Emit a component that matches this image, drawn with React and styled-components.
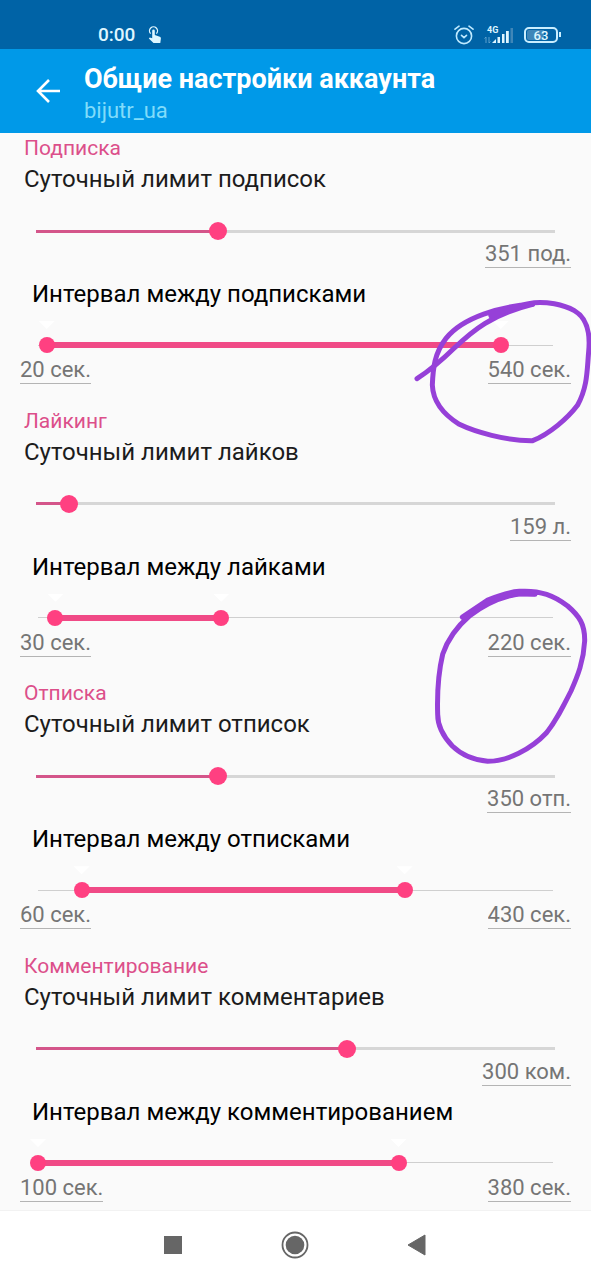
import React, {useState} from 'react';
import styled, {createGlobalStyle} from 'styled-components';

const GlobalStyle = createGlobalStyle`
    * {
        box-sizing: border-box;
    }

    body {
        margin: 0;
        background: #fafafa;
        font-family: Roboto, "Noto Sans", sans-serif;
    }
`

const Page = styled.div`
    display: flex;
    flex-direction: column;
    min-height: 100vh;
    overflow: hidden;
`

const StatusBar = styled.div`
    display: flex;
    justify-content: space-between;
    align-items: center;
    height: 49px;
    padding: 20px 30px 0 98px;
    background: #0063a6;
    color: #dff6ff;
`

const StatusGroup = styled.div`
    display: flex;
    align-items: center;
    gap: ${props => props.$tight ? '10px' : '13px'};
`

const Clock = styled.span`
    font-size: 19px;
    line-height: 24px;
    font-weight: 500;
`

const Network = styled.div`
    display: grid;
    font-size: 9px;
    line-height: 9px;
    font-weight: 700;
`

const NetworkType = styled.span`
    grid-area: 1 / 1;
    padding-left: 3px;
`

const NetworkBars = styled.svg`
    grid-area: 1 / 1;
`

const Battery = styled.div`
    display: flex;
    align-items: center;

    &::after {
        content: '';
        width: 2px;
        height: 5px;
        margin-left: 1px;
        background: #c9eeff;
    }
`

const BatteryLevel = styled.span`
    width: 34px;
    height: 16px;
    border: 2px solid #c9eeff;
    border-radius: 5px;
    background: linear-gradient(90deg, #3f86b8 60%, transparent 60%) content-box;
    padding: 1px;
    font-size: 13px;
    line-height: 11px;
    font-weight: 500;
    text-align: center;
`

const AppBar = styled.header`
    display: flex;
    align-items: center;
    gap: 24px;
    height: 84px;
    padding: 0 36px;
    background: #0099e8;
    color: #fff;
`

const BackButton = styled.button`
    display: flex;
    padding: 0;
    border: 0;
    background: none;
    color: inherit;
    cursor: pointer;
`

const Heading = styled.div`
    padding-top: 8px;
`

const Title = styled.h1`
    margin: 0;
    font-size: 27px;
    line-height: 32px;
    font-weight: 700;
`

const Account = styled.p`
    margin: 0;
    font-size: 22px;
    line-height: 32px;
    color: #80dcfa;
`

const Settings = styled.main`
    display: flex;
    flex: 1;
    flex-direction: column;
    justify-content: space-between;
    padding-bottom: 8px;
`

const Section = styled.section`
    display: flex;
    flex-direction: column;
    padding: 0 20px;
`

const SectionTitle = styled.h2`
    margin: 0;
    padding: 0 4px;
    font-size: 21px;
    line-height: 30px;
    font-weight: 400;
    color: #dc4f8a;
`

const Label = styled.label`
    padding: 0 4px;
    font-size: 24px;
    line-height: 32px;
    color: #1c1c1c;
`

const IntervalLabel = styled.div`
    padding: 8px 12px 0;
    font-size: 24px;
    line-height: 36px;
    color: #000;
`

const Slider = styled.div`
    display: grid;
    align-items: center;
    height: 18px;
    padding: 0 7px;
    margin-top: 27px;

    > * {
        grid-area: 1 / 1 / 2 / 2;
    }
`

const RangeSlider = styled(Slider)`
    position: relative;
    height: 22px;
    padding: 0 10px;
    margin-top: 22px;
`

const Track = styled.div`
    height: ${props => props.$thin ? '1px' : '3px'};
    margin: 0 ${props => props.$thin ? '8px' : '9px'};
    background: ${props => props.$thin ? '#cfcfcf' : '#d6d6d6'};
`

const Fill = styled.div`
    height: 3px;
    background: #d4558a;
`

const RangeFillArea = styled.div`
    margin: 0 8px;
`

const RangeFill = styled.div`
    height: 6px;
    background: #f04a86;
`

const Range = styled.input`
    appearance: none;
    width: 100%;
    height: 18px;
    margin: 0;
    background: transparent;
    pointer-events: none;

    &::-webkit-slider-thumb {
        appearance: none;
        width: ${props => props.$size};
        height: ${props => props.$size};
        border: 0;
        border-radius: 50%;
        background: #ff4081;
        pointer-events: auto;
        cursor: pointer;
    }
`

// white arrows hanging over the thumbs
const Pointers = styled.div`
    position: absolute;
    top: -13px;
    left: 8px;
    right: 8px;
    height: 8px;
`

const Pointer = styled.span`
    position: absolute;
    top: 0;
    width: 16px;
    height: 8px;
    background: #fff;
    clip-path: polygon(0 0, 100% 0, 50% 100%);
    transform: translateX(-50%);
`

const Values = styled.div`
    display: flex;
    justify-content: ${props => props.$end ? 'flex-end' : 'space-between'};
`

const Value = styled.input`
    field-sizing: content;
    height: 28px;
    padding: 0;
    border: 0;
    border-bottom: 1px solid #b4b4b4;
    background: none;
    font-family: inherit;
    font-size: 22px;
    line-height: 26px;
    color: #757575;
    outline: none;
`

const Interval = styled.div`
    position: relative;
`

const Scribble = styled.svg`
    position: absolute;
    top: ${props => props.$top};
    right: -20px;
    z-index: 1;
    overflow: visible;
    pointer-events: none;
    fill: none;
    stroke: #9640d8;
    stroke-width: 15;
    stroke-linecap: round;
    stroke-linejoin: round;
`

const NavBar = styled.nav`
    display: flex;
    justify-content: center;
    align-items: center;
    gap: 92px;
    height: 70px;
    padding: 0 2px 2px 0;
    border-top: 1px solid #f2f2f2;
    background: #fff;
`

const NavButton = styled.button`
    display: flex;
    padding: 0;
    border: 0;
    background: none;
    color: #666;
    cursor: pointer;
`

const sections = [
    {
        id: 'follow',
        title: 'Подписка',
        limit: {label: 'Суточный лимит подписок', value: 351, max: 1000, unit: 'под.'},
        interval: {label: 'Интервал между подписками', from: 20, to: 540, min: 10, max: 600},
        mark: 'wide',
    },
    {
        id: 'like',
        title: 'Лайкинг',
        limit: {label: 'Суточный лимит лайков', value: 159, max: 2500, unit: 'л.'},
        interval: {label: 'Интервал между лайками', from: 30, to: 220, min: 10, max: 600},
        mark: 'tall',
    },
    {
        id: 'unfollow',
        title: 'Отписка',
        limit: {label: 'Суточный лимит отписок', value: 350, max: 1000, unit: 'отп.'},
        interval: {label: 'Интервал между отписками', from: 60, to: 430, min: 10, max: 600},
    },
    {
        id: 'comment',
        title: 'Комментирование',
        limit: {label: 'Суточный лимит комментариев', value: 300, max: 500, unit: 'ком.'},
        interval: {label: 'Интервал между комментированием', from: 100, to: 380, min: 100, max: 500},
    },
];

function Limit({id, label, value, max, unit}) {
    const [current, setCurrent] = useState(value);

    return (
        <>
            <Label htmlFor={`${id}-limit`}>{label}</Label>
            <Slider>
                <Track><Fill style={{width: `${current / max * 100}%`}} /></Track>
                <Range
                    id={`${id}-limit`}
                    type="range"
                    $size="18px"
                    min={0}
                    max={max}
                    value={current}
                    onChange={e => setCurrent(Number(e.target.value))}
                />
            </Slider>
            <Values $end>
                <Value type="text" readOnly aria-label={label} value={`${current} ${unit}`} />
            </Values>
        </>
    );
}

function IntervalSetting({id, label, from, to, min, max, mark}) {
    const [low, setLow] = useState(from);
    const [high, setHigh] = useState(to);
    const percent = (value) => (value - min) / (max - min) * 100;

    return (
        <Interval role="group" aria-labelledby={`${id}-interval`}>
            <IntervalLabel id={`${id}-interval`}>{label}</IntervalLabel>
            <RangeSlider>
                <Track $thin />
                <RangeFillArea>
                    <RangeFill style={{marginLeft: `${percent(low)}%`, width: `${percent(high) - percent(low)}%`}} />
                </RangeFillArea>
                <Pointers>
                    <Pointer style={{left: `${percent(low)}%`}} />
                    <Pointer style={{left: `${percent(high)}%`}} />
                </Pointers>
                <Range
                    type="range"
                    $size="16px"
                    aria-label={`${label}: от`}
                    min={min}
                    max={max}
                    value={low}
                    onChange={e => setLow(Math.min(Number(e.target.value), high))}
                />
                <Range
                    type="range"
                    $size="16px"
                    aria-label={`${label}: до`}
                    min={min}
                    max={max}
                    value={high}
                    onChange={e => setHigh(Math.max(Number(e.target.value), low))}
                />
            </RangeSlider>
            <Values>
                <Value type="text" readOnly aria-label={`${label}: от`} value={`${low} сек.`} />
                <Value type="text" readOnly aria-label={`${label}: до`} value={`${high} сек.`} />
            </Values>
            {mark === 'wide' &&
                <Scribble $top="12px" width="200" height="180" viewBox="0 0 600 540" aria-hidden="true">
                    <path d="M78 296 C112 274 150 243 190 204 C245 152 300 104 425 73" />
                    <path d="M425 73 C330 78 215 112 165 175 C130 220 126 265 124 315 C126 365 160 405 205 433 C250 455 345 483 425 482 C475 462 530 415 560 375 C590 320 588 270 593 215 C598 165 590 115 550 92 C515 72 465 65 430 68 C395 72 350 86 300 108" />
                </Scribble>
            }
            {mark === 'tall' &&
                <Scribble $top="35px" width="200" height="200" viewBox="0 0 600 600" aria-hidden="true">
                    <path d="M214 123 L290 72 C330 56 355 48 385 46 C450 42 490 60 530 90 C565 120 582 145 581 195 C578 255 560 300 540 345 C515 395 495 435 465 472 C420 520 350 556 290 556 C245 552 210 535 184 510 C155 480 140 450 140 415 C138 350 142 290 155 235 C170 190 200 150 235 120 C280 85 330 62 385 53 L432 55" />
                    <path d="M222 122 L292 78 C325 62 355 54 385 52 L430 52" strokeWidth="18" />
                </Scribble>
            }
        </Interval>
    );
}

export default function App() {
    return (
        <Page>
            <GlobalStyle />
            <StatusBar>
                <StatusGroup>
                    <Clock>0:00</Clock>
                    <svg width="14" height="18" viewBox="0 0 14 18" fill="currentColor">
                        <path d="M2.6 7.6A4 4 0 1 1 8.4 7.6" fill="none" stroke="currentColor" strokeWidth="1.3" />
                        <path d="M4.2 4.8a1.3 1.3 0 0 1 2.6 0V9l5 1.8c.8.3 1.2.9 1.1 1.7L12.3 17H5.5L.8 12.6l1-1 2.4.6z" />
                    </svg>
                </StatusGroup>
                <StatusGroup $tight>
                    <svg width="20" height="20" viewBox="0 0 20 20" fill="none" stroke="#bfeaff" strokeWidth="1.6" strokeLinecap="round">
                        <circle cx="10" cy="11" r="7.6" />
                        <path d="M7.5 10.3 10 12.6l2.5-2.3M1 4.2 5 1.2M19 4.2l-4-3" />
                    </svg>
                    <Network>
                        <NetworkType>4G</NetworkType>
                        <NetworkBars width="30" height="18" viewBox="0 0 30 18" fill="currentColor">
                            <path d="M2 17v-6M.5 12.5 2 11M5 11v6M6.5 15.5 5 17" fill="none" stroke="#5ba0cd" />
                            <path d="M8 17l4-4v4zM13.5 11H16v6h-2.5zM18 8h2.5v9H18zM22 5h2.8v12H22z" />
                            <path d="M26.5 2H29v15h-2.5z" fill="#3f86b8" />
                        </NetworkBars>
                    </Network>
                    <Battery><BatteryLevel>63</BatteryLevel></Battery>
                </StatusGroup>
            </StatusBar>
            <AppBar>
                <BackButton aria-label="Назад">
                    <svg width="24" height="24" viewBox="0 0 24 24" fill="none" stroke="currentColor" strokeWidth="2.6">
                        <path d="M24 12H2M13 1 2 12l11 11" />
                    </svg>
                </BackButton>
                <Heading>
                    <Title>Общие настройки аккаунта</Title>
                    <Account>bijutr_ua</Account>
                </Heading>
            </AppBar>
            <Settings>
                {sections.map(({id, title, limit, interval, mark}) =>
                    <Section key={id}>
                        <SectionTitle>{title}</SectionTitle>
                        <Limit id={id} {...limit} />
                        <IntervalSetting id={id} mark={mark} {...interval} />
                    </Section>
                )}
            </Settings>
            <NavBar>
                <NavButton aria-label="Недавние">
                    <svg width="30" height="30" viewBox="0 0 30 30" fill="currentColor">
                        <path d="M6 6h18v18H6z" />
                    </svg>
                </NavButton>
                <NavButton aria-label="Домой">
                    <svg width="30" height="30" viewBox="0 0 30 30" fill="currentColor">
                        <circle cx="15" cy="15" r="12.5" fill="none" stroke="currentColor" strokeWidth="1.8" />
                        <circle cx="15" cy="15" r="9.3" />
                    </svg>
                </NavButton>
                <NavButton aria-label="Назад">
                    <svg width="30" height="30" viewBox="0 0 30 30" fill="currentColor">
                        <path d="M23 5v20L6 15z" stroke="currentColor" strokeLinejoin="round" />
                    </svg>
                </NavButton>
            </NavBar>
        </Page>
    );
}
